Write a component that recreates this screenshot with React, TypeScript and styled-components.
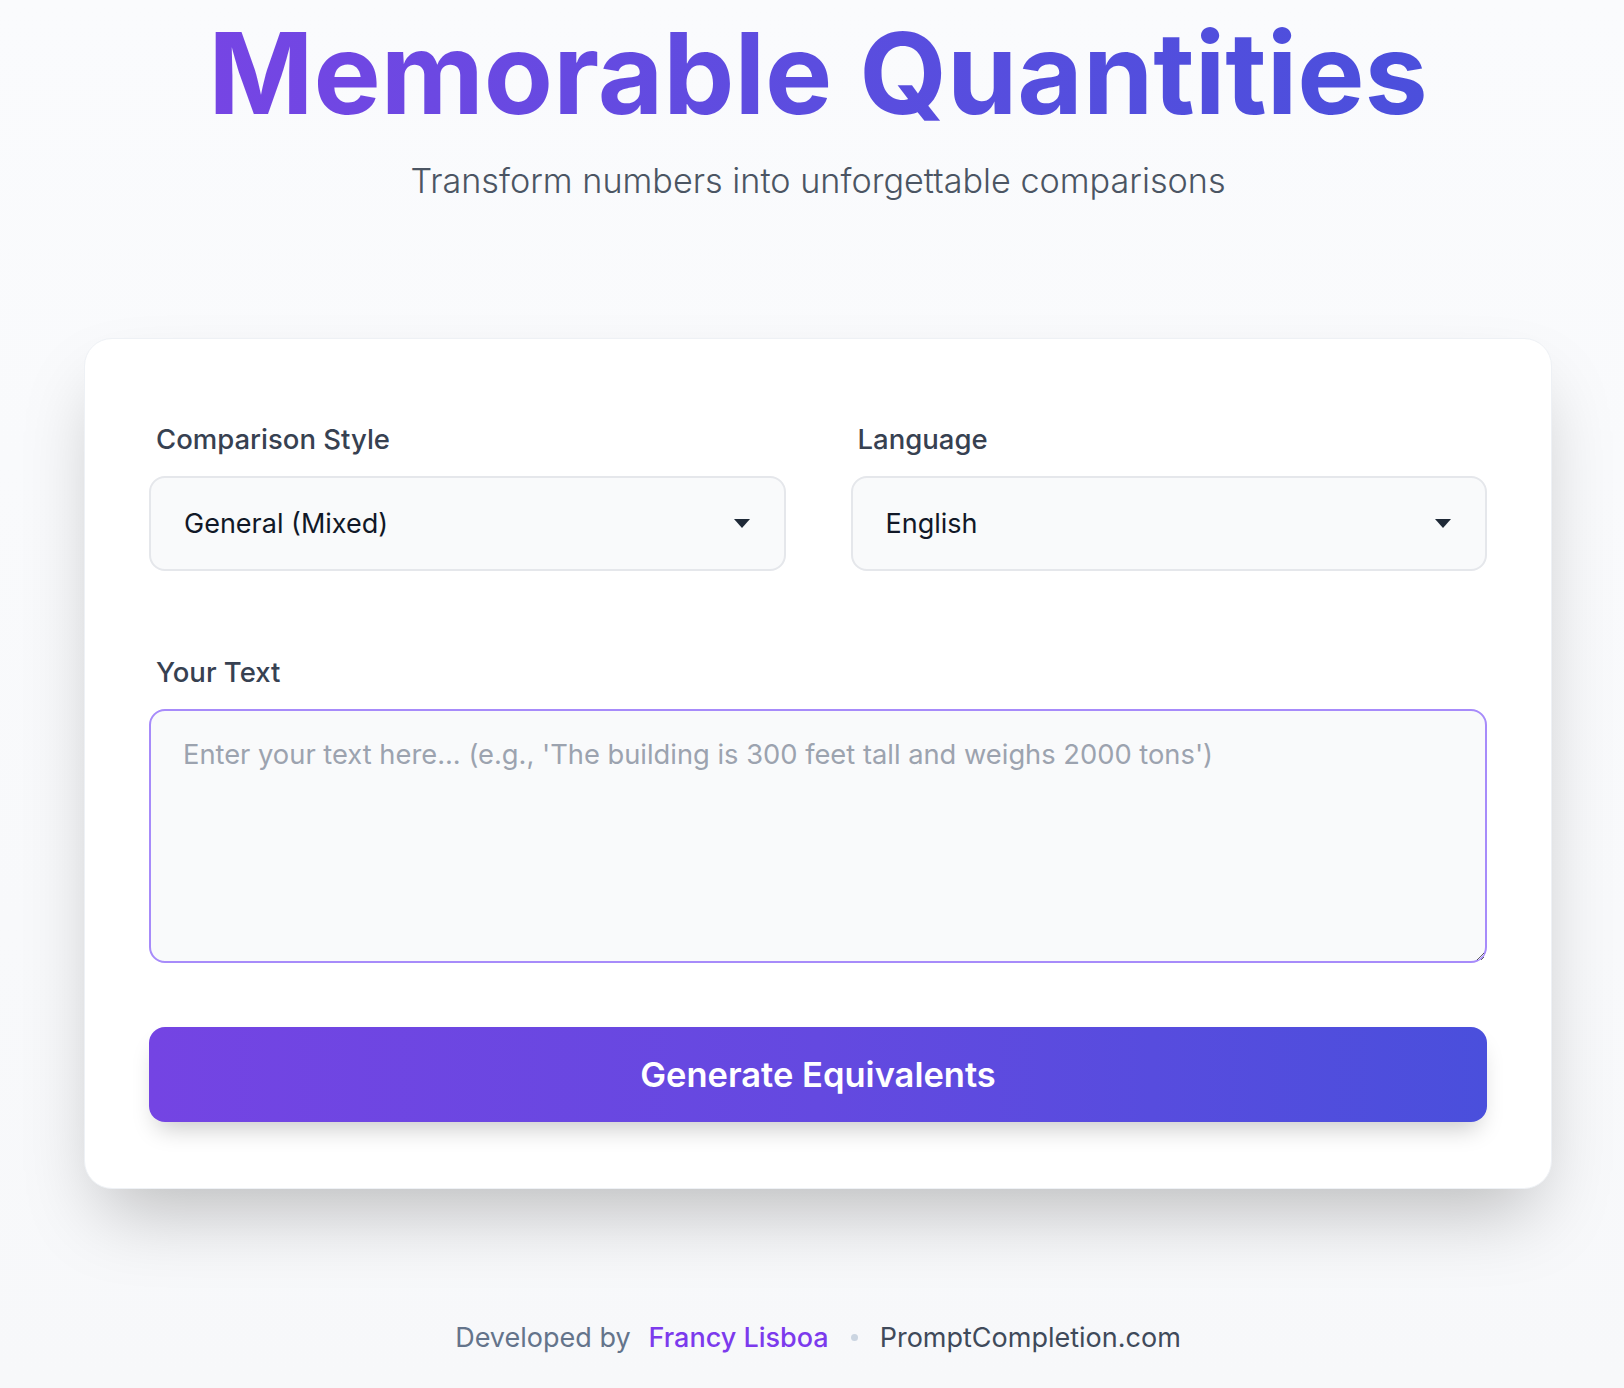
import React from 'react';
import styled, { createGlobalStyle } from 'styled-components';

const GlobalStyle = createGlobalStyle`
  * {
    box-sizing: border-box;
  }

  body {
    margin: 0;
    background: linear-gradient(180deg, #fafbfd 0%, #f7f8fa 100%);
    font-family: Inter, 'Noto Sans', sans-serif;
    color: #1f2937;
  }
`;

export default function App() {
  return (
    <>
      <GlobalStyle />
      <Page>
        <Header>
          <Title>Memorable Quantities</Title>
          <Subtitle>Transform numbers into unforgettable comparisons</Subtitle>
        </Header>

        <Card>
          <Row>
            <Field>
              <Label>Comparison Style</Label>
              <SelectBox>
                <span>General (Mixed)</span>
                <Caret />
              </SelectBox>
            </Field>
            <Field>
              <Label>Language</Label>
              <SelectBox>
                <span>English</span>
                <Caret />
              </SelectBox>
            </Field>
          </Row>

          <Field>
            <Label>Your Text</Label>
            <TextArea placeholder="Enter your text here... (e.g., 'The building is 300 feet tall and weighs 2000 tons')" />
          </Field>

          <GenerateButton>Generate Equivalents</GenerateButton>
        </Card>

        <Footer>
          <Muted>Developed by</Muted>
          <Author>Francy Lisboa</Author>
          <Dot />
          <Site>PromptCompletion.com</Site>
        </Footer>
      </Page>
    </>
  );
}

const Page = styled.div`
  display: flex;
  flex-direction: column;
  align-items: center;

  min-height: 1388px;
  padding: 0 66px 0 78px;
`;

const Header = styled.header`
  display: flex;
  flex-direction: column;
  align-items: center;
  gap: 18px;

  padding-top: 6px;
`;

const Title = styled.h1`
  margin: 0;

  font-size: 113px;
  font-weight: 700;
  line-height: 1.2;
  letter-spacing: 0;

  background: linear-gradient(90deg, #7645e4 0%, #5b4ddf 50%, #4b4fdc 100%);
  -webkit-background-clip: text;
  background-clip: text;
  color: transparent;
`;

const Subtitle = styled.p`
  margin: 0;

  font-size: 34.2px;
  font-weight: 300;
  color: #4b5563;
`;

const Card = styled.main`
  display: flex;
  flex-direction: column;
  gap: 40px;

  width: 100%;
  max-width: 1468px;
  margin-top: 137px;
  padding: 83px 64px 66px;

  background: #ffffff;
  border: 1px solid #eef1f5;
  border-radius: 28px;
  box-shadow: 0 38px 76px -18px rgba(0, 0, 0, 0.25);
`;

const Row = styled.div`
  display: grid;
  grid-template-columns: 1fr 1fr;
  gap: 65px;
  margin-bottom: 44px;
`;

const Field = styled.div`
  display: flex;
  flex-direction: column;
  gap: 20px;
`;

const Label = styled.label`
  padding-left: 7px;

  font-size: 27.5px;
  font-weight: 500;
  color: #374151;
`;

const SelectBox = styled.div`
  display: flex;
  align-items: center;
  justify-content: space-between;

  height: 95px;
  padding: 0 34px 0 33px;

  background: #f9fafb;
  border: 2px solid #e5e7eb;
  border-radius: 16px;

  font-size: 27px;
  color: #111827;
`;

const Caret = styled.span`
  width: 0;
  height: 0;

  border-left: 8px solid transparent;
  border-right: 8px solid transparent;
  border-top: 9px solid #1f2937;
`;

const TextArea = styled.textarea`
  height: 254px;
  padding: 27px 32px;

  background: #f9fafb;
  border: 2px solid #a78bfa;
  border-radius: 16px;
  outline: none;
  resize: vertical;

  font-family: inherit;
  font-size: 27.3px;
  color: #111827;

  &::placeholder {
    color: #9ca3af;
  }
`;

const GenerateButton = styled.button`
  height: 95px;
  margin-top: 24px;

  border: none;
  border-radius: 16px;
  background: linear-gradient(90deg, #7444e3 0%, #6449e0 50%, #4a4fdc 100%);
  box-shadow: 0 14px 24px -8px rgba(0, 0, 0, 0.22);

  font-family: inherit;
  font-size: 34.5px;
  font-weight: 600;
  color: #ffffff;
  cursor: pointer;
`;

const Footer = styled.footer`
  display: flex;
  align-items: center;
  gap: 18px;

  margin-top: 132px;

  font-size: 27px;
`;

const Muted = styled.span`
  color: #64748b;
`;

const Author = styled.span`
  font-weight: 500;
  color: #7c3aed;
`;

const Dot = styled.span`
  width: 7px;
  height: 7px;
  margin: 0 4px;

  border-radius: 50%;
  background: #cbd5e1;
`;

const Site = styled.span`
  color: #3f4a5a;
`;
